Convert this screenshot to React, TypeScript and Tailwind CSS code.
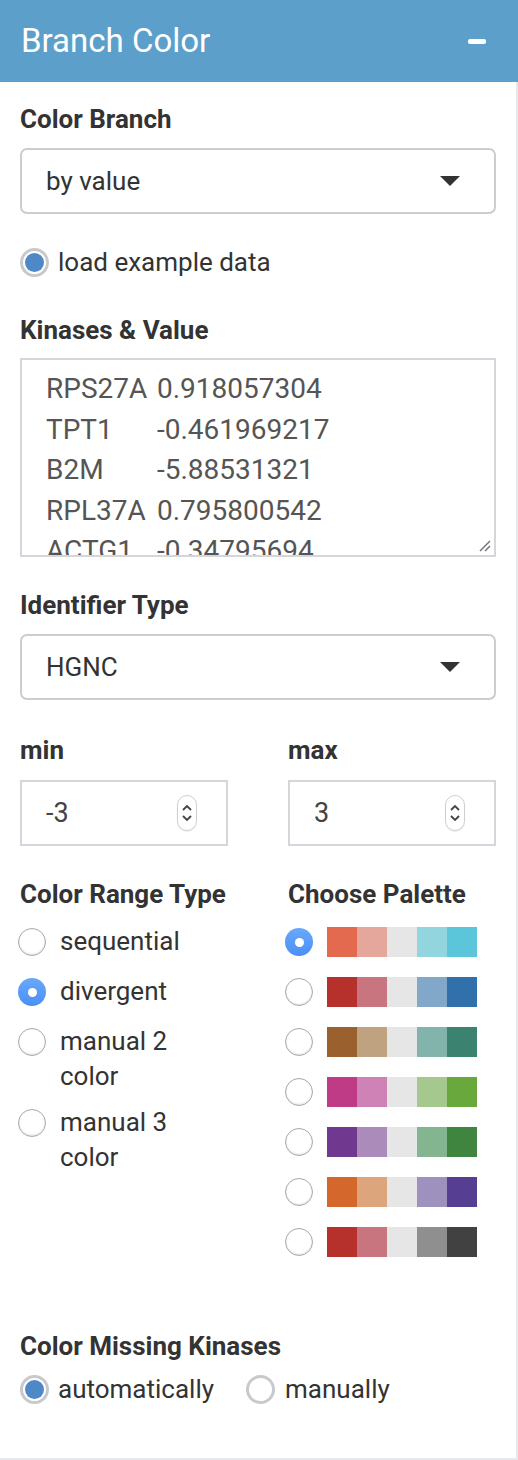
import React from 'react';

type Palette = string[];

const palettes: Palette[] = [
  ['#e3694f', '#e5a79b', '#e6e6e6', '#92d5df', '#5bc5da'],
  ['#b7312c', '#c97580', '#e6e6e6', '#82a8c9', '#3270ab'],
  ['#9a602d', '#bfa381', '#e6e6e6', '#82b4ac', '#3b8270'],
  ['#bf3b86', '#ce82b5', '#e6e6e6', '#a5c88e', '#68a83d'],
  ['#70388e', '#aa8bb9', '#e6e6e6', '#84b591', '#3f853f'],
  ['#d4682c', '#dca57b', '#e6e6e6', '#9f91bd', '#563e93'],
  ['#b7312c', '#c97580', '#e6e6e6', '#8f8f8f', '#414141'],
];

const kinases = [
  ['RPS27A', '0.918057304'],
  ['TPT1', '-0.461969217'],
  ['B2M', '-5.88531321'],
  ['RPL37A', '0.795800542'],
  ['ACTG1', '-0.34795694'],
];

const rangeTypes = [
  { label: ['sequential'], checked: false },
  { label: ['divergent'], checked: true },
  { label: ['manual 2', 'color'], checked: false },
  { label: ['manual 3', 'color'], checked: false },
];

// ring style radio (load example data / missing kinases)
const RingRadio = ({ checked }: { checked: boolean }) => (
  <span className="w-[29px] h-[29px] rounded-full border-[3px] border-[#c7c9cc] bg-white flex items-center justify-center shrink-0">
    {checked && <span className="w-[19px] h-[19px] rounded-full bg-[#4f88c7]" />}
  </span>
);

// mac style radio
const MacRadio = ({ checked }: { checked: boolean }) =>
  checked ? (
    <span className="w-[28px] h-[28px] rounded-full bg-gradient-to-b from-[#69a9fb] to-[#4a8ff5] flex items-center justify-center shrink-0">
      <span className="w-[9px] h-[9px] rounded-full bg-white" />
    </span>
  ) : (
    <span className="block w-[28px] h-[28px] rounded-full border border-[#a8a8a8] bg-white shadow-[inset_0_-1px_2px_rgba(0,0,0,0.12)] shrink-0" />
  );

const Label = ({ children }: { children: React.ReactNode }) => (
  <div className="text-[26px] leading-[30px] font-bold text-[#333]">{children}</div>
);

const Select = ({ value }: { value: string }) => (
  <div className="h-[66px] rounded-[7px] border-2 border-[#cdcdcd] bg-white flex items-center justify-between pl-[24px] pr-[34px]">
    <span className="text-[26px] text-[#333]">{value}</span>
    <svg width="20" height="10" viewBox="0 0 20 10">
      <path d="M0 0 L20 0 L10 10 Z" fill="#333" />
    </svg>
  </div>
);

const NumberInput = ({ value }: { value: string }) => (
  <div className="h-[66px] border-2 border-[#d3d6db] bg-white flex items-center justify-between pl-[24px] pr-[29px]">
    <span className="text-[27px] text-[#444]">{value}</span>
    <span className="w-[20px] h-[36px] rounded-full border border-[#cfcfcf] flex flex-col items-center justify-center gap-[4px] shadow-[0_1px_1px_rgba(0,0,0,0.08)]">
      <svg width="10" height="6" viewBox="0 0 10 6">
        <path d="M1 5 L5 1 L9 5" fill="none" stroke="#444" strokeWidth="1.8" />
      </svg>
      <svg width="10" height="6" viewBox="0 0 10 6">
        <path d="M1 1 L5 5 L9 1" fill="none" stroke="#444" strokeWidth="1.8" />
      </svg>
    </span>
  </div>
);

export default function App() {
  return (
    <div className="min-h-[1460px] bg-[#eceef2] font-[Roboto,sans-serif]">
      <div className="w-[518px] bg-white border-r-2 border-b-2 border-[#e6e8ec]">
        {/* Header */}
        <div className="h-[82px] w-[518px] bg-[#5c9fca] flex items-center justify-between pl-[21px] pr-[32px]">
          <span className="text-[33px] text-white">Branch Color</span>
          <span className="w-[18px] h-[5px] rounded-[2px] bg-white" />
        </div>

        <div className="px-[20px] pb-[54px]">
          <div className="mt-[22px]">
            <Label>Color Branch</Label>
          </div>
          <div className="mt-[14px]">
            <Select value="by value" />
          </div>

          <div className="mt-[33px] flex items-center gap-[9px]">
            <RingRadio checked />
            <span className="text-[26px] leading-[30px] text-[#333]">load example data</span>
          </div>

          <div className="mt-[38px]">
            <Label>Kinases &amp; Value</Label>
          </div>
          <div className="mt-[13px] relative h-[199px] border-2 border-[#d3d6db] bg-white overflow-hidden">
            <div className="pl-[24px] pt-[9px] text-[28px] leading-[40.5px] text-[#555]">
              {kinases.map(([name, value]) => (
                <div key={name} className="grid grid-cols-[111px_1fr] whitespace-nowrap">
                  <span>{name}</span>
                  <span>{value}</span>
                </div>
              ))}
            </div>
            <svg className="absolute right-[3px] bottom-[3px]" width="14" height="14" viewBox="0 0 14 14">
              <path d="M13 3 L3 13 M13 8 L8 13" stroke="#777" strokeWidth="1.5" />
            </svg>
          </div>

          <div className="mt-[33px]">
            <Label>Identifier Type</Label>
          </div>
          <div className="mt-[14px]">
            <Select value="HGNC" />
          </div>

          <div className="mt-[35px] flex justify-between">
            <div className="w-[208px]">
              <Label>min</Label>
              <div className="mt-[15px]">
                <NumberInput value="-3" />
              </div>
            </div>
            <div className="w-[208px]">
              <Label>max</Label>
              <div className="mt-[15px]">
                <NumberInput value="3" />
              </div>
            </div>
          </div>

          <div className="mt-[33px] grid grid-cols-[268px_1fr]">
            <div>
              <Label>Color Range Type</Label>
              <div className="mt-[15px] flex flex-col gap-[15px]">
                {rangeTypes.map((r, i) => (
                  <div key={r.label[0]} className={i === 3 ? 'flex items-start gap-[14px] -mt-[4px]' : 'flex items-start gap-[14px]'}>
                    <span className="mt-[4px] -ml-[2px]">
                      <MacRadio checked={r.checked} />
                    </span>
                    <span className="text-[26px] leading-[35px] text-[#333]">
                      {r.label.map((l) => (
                        <div key={l}>{l}</div>
                      ))}
                    </span>
                  </div>
                ))}
              </div>
            </div>
            <div>
              <Label>Choose Palette</Label>
              <div className="mt-[18px] flex flex-col gap-[20px]">
                {palettes.map((p, i) => (
                  <div key={i} className="flex items-center gap-[14px] h-[30px]">
                    <span className="-ml-[3px]">
                      <MacRadio checked={i === 0} />
                    </span>
                    <div className="flex">
                      {p.map((c, j) => (
                        <span key={j} className="block w-[30px] h-[30px] shrink-0" style={{ backgroundColor: c }} />
                      ))}
                    </div>
                  </div>
                ))}
              </div>
            </div>
          </div>

          <div className="mt-[74px]">
            <Label>Color Missing Kinases</Label>
          </div>
          <div className="mt-[13px] flex items-center">
            <RingRadio checked />
            <span className="ml-[9px] text-[26px] leading-[30px] text-[#333]">automatically</span>
            <span className="ml-[32px]">
              <RingRadio checked={false} />
            </span>
            <span className="ml-[10px] text-[26px] leading-[30px] text-[#333]">manually</span>
          </div>
        </div>
      </div>
    </div>
  );
}
